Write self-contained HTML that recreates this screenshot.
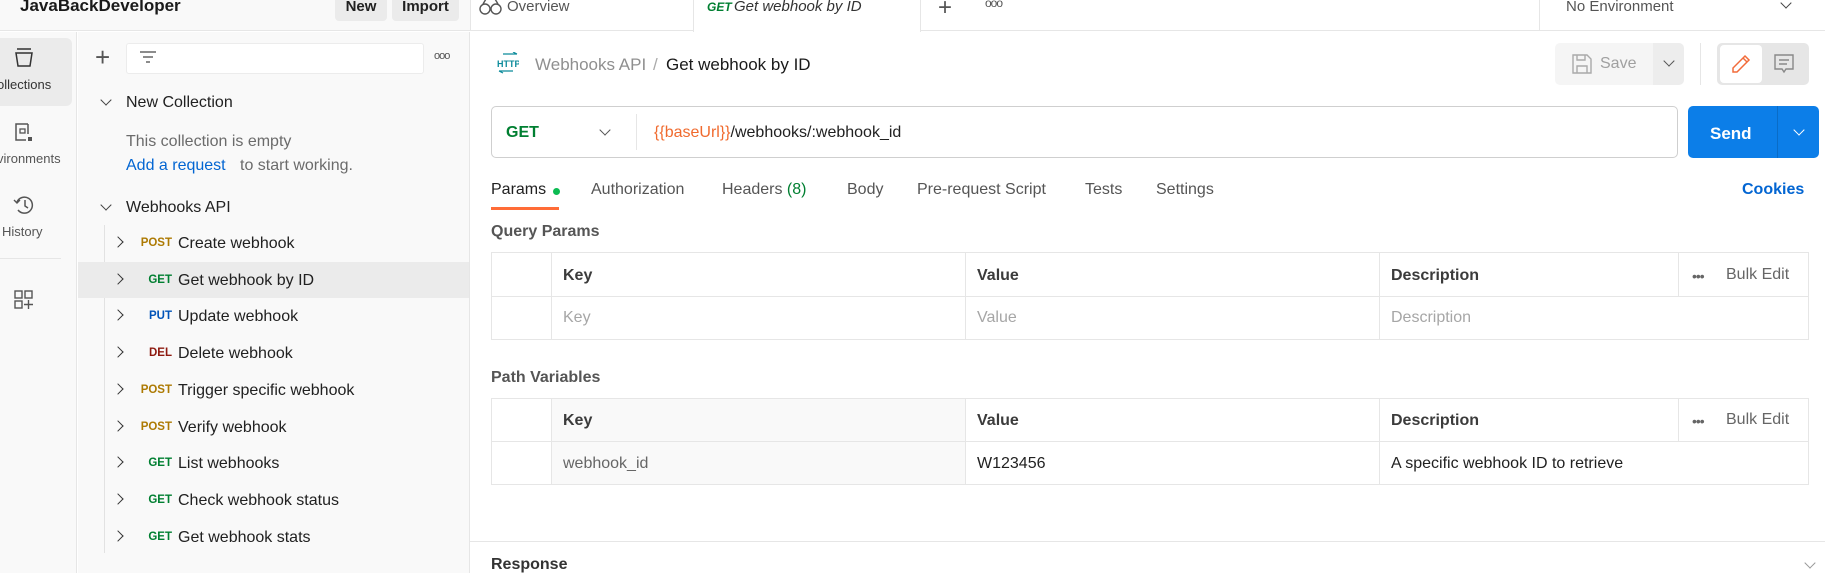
<!DOCTYPE html>
<html><head><meta charset="utf-8">
<style>
*{box-sizing:border-box;margin:0;padding:0}
body{width:1825px;height:573px;overflow:hidden;position:relative;background:#fff;font-family:"Liberation Sans",Arial,sans-serif;color:#212121;font-size:16px}
.a{position:absolute;white-space:nowrap}
.t{margin-top:2px}
.m{font-size:11.5px;font-weight:bold;text-align:right;width:50px}
.post{color:#ad7a03}.get{color:#007f31}.put{color:#0053b8}.del{color:#8e1a10}
.chev{position:absolute;left:114px;width:8px;height:8px;border-right:1.5px solid #333;border-bottom:1.5px solid #333;transform:rotate(-45deg)}
.dn{position:absolute;width:8px;height:8px;border-right:1.5px solid #444;border-bottom:1.5px solid #444;transform:rotate(45deg)}
.th{font-weight:bold;color:#3b3b3b}
.ph{color:#a6a6a6}
</style></head><body>
<!-- top bar -->
<div class="a" style="left:0;top:0;width:470px;height:31px;background:#f9f9f9;border-bottom:1px solid #e6e6e6"></div>
<div class="a" style="left:20px;top:-4px;font-size:17px;font-weight:bold;color:#1a1a1a">JavaBackDeveloper</div>
<div class="a" style="left:335px;top:-6px;width:52px;height:27px;background:#ebebeb;border-radius:4px;font-size:15px;font-weight:bold;text-align:center;line-height:26px">New</div>
<div class="a" style="left:392px;top:-6px;width:67px;height:27px;background:#ebebeb;border-radius:4px;font-size:15px;font-weight:bold;text-align:center;line-height:26px">Import</div>
<div class="a" style="left:470px;top:0;width:1355px;height:31px;border-bottom:1px solid #e6e6e6;border-left:1px solid #e6e6e6"></div>
<div class="a" style="left:693px;top:0;width:228px;height:32px;background:#fff;border-left:1px solid #e6e6e6;border-right:1px solid #e6e6e6"></div>
<svg class="a" style="left:479px;top:0" width="24" height="16" viewBox="0 0 24 16"><circle cx="6" cy="9" r="5" fill="none" stroke="#555" stroke-width="1.4"/><circle cx="17" cy="9" r="5" fill="none" stroke="#555" stroke-width="1.4"/><path d="M4 4 L7 -1 M19 4 L16 -1" stroke="#555" stroke-width="1.4"/></svg>
<div class="a" style="left:507px;top:-2px;font-size:15px;color:#555">Overview</div>
<div class="a" style="left:707px;top:0px;font-size:12px;font-weight:bold;font-style:italic;color:#007f31">GET</div>
<div class="a" style="left:734px;top:-2px;font-size:15px;font-style:italic;color:#333">Get webhook by ID</div>
<div class="a" style="left:938px;top:-6px;font-size:24px;color:#555;font-weight:200">+</div>
<div class="a" style="left:985px;top:-4px;font-size:12px;color:#555;letter-spacing:-1px">ooo</div>
<div class="a" style="left:1539px;top:0;width:1px;height:31px;background:#e6e6e6"></div>
<div class="a" style="left:1566px;top:-2px;font-size:15px;color:#555">No Environment</div>
<div class="dn" style="left:1782px;top:-1px"></div>
<!-- rail -->
<div class="a" style="left:0;top:32px;width:77px;height:541px;background:#f9f9f9;border-right:1px solid #e6e6e6"></div>
<div class="a" style="left:0;top:38px;width:72px;height:68px;background:#ebebeb;border-radius:0 6px 6px 0"></div>
<svg class="a" style="left:15px;top:48px" width="18" height="20" viewBox="0 0 18 20"><path d="M2 1H16 M1 5H17 L15 18H3 Z" fill="none" stroke="#333" stroke-width="1.5"/></svg>
<div class="a" style="left:-3px;top:77px;font-size:13px;color:#333">ollections</div>
<svg class="a" style="left:14px;top:122px" width="20" height="20" viewBox="0 0 20 20"><path d="M14 2H2V18H12" fill="none" stroke="#555" stroke-width="1.5"/><path d="M14 2V12" stroke="#555" stroke-width="1.5"/><rect x="6" y="7" width="5" height="4" fill="none" stroke="#555" stroke-width="1.3"/><rect x="14" y="15" width="4" height="4" fill="#555"/></svg>
<div class="a" style="left:-3px;top:151px;font-size:13px;color:#555">vironments</div>
<svg class="a" style="left:13px;top:194px" width="22" height="22" viewBox="0 0 22 22"><path d="M4 8A8 8 0 1 1 5 16" fill="none" stroke="#555" stroke-width="1.5"/><path d="M1 6L4 9L7 6" fill="none" stroke="#555" stroke-width="1.4"/><path d="M12 6V12L15 14" fill="none" stroke="#555" stroke-width="1.5"/></svg>
<div class="a" style="left:2px;top:224px;font-size:13px;color:#555">History</div>
<div class="a" style="left:0;top:258px;width:61px;height:1px;background:#e6e6e6"></div>
<svg class="a" style="left:13px;top:289px" width="22" height="22" viewBox="0 0 22 22"><g fill="none" stroke="#555" stroke-width="1.4"><rect x="2" y="2" width="7" height="7"/><rect x="12" y="2" width="7" height="7"/><rect x="2" y="12" width="7" height="7"/><path d="M15.5 11V20M11 15.5H20"/></g></svg>
<!-- sidebar -->
<div class="a" style="left:78px;top:32px;width:392px;height:541px;background:#f9f9f9;border-right:1px solid #e6e6e6"></div>
<div class="a" style="left:95px;top:42px;font-size:26px;color:#555;font-weight:200">+</div>
<div class="a" style="left:126px;top:43px;width:298px;height:31px;background:#fff;border:1px solid #ececec;border-radius:3px"></div>
<svg class="a" style="left:139px;top:50px" width="18" height="16" viewBox="0 0 18 16"><path d="M1 2H17M4 7H14M7 12H11" stroke="#666" stroke-width="1.4"/></svg>
<div class="a" style="left:434px;top:50px;font-size:11px;color:#555;letter-spacing:-1px">ooo</div>
<div class="dn" style="left:102px;top:96px"></div>
<div class="a t" style="left:126px;top:92px">New Collection</div>
<div class="a t" style="left:126px;top:131px;color:#6b6b6b">This collection is empty</div>
<div class="a t" style="left:126px;top:155px;color:#0265d2">Add a request</div>
<div class="a t" style="left:240px;top:155px;color:#6b6b6b">to start working.</div>
<div class="dn" style="left:102px;top:201px"></div>
<div class="a t" style="left:126px;top:197px">Webhooks API</div>
<div class="a" style="left:104px;top:225px;width:1px;height:328px;background:#e2e2e2"></div>
<div class="a" style="left:78px;top:262px;width:391px;height:36px;background:#ebebeb"></div>
<div class="chev" style="top:238px"></div><div class="a m post" style="left:122px;top:237px">POST</div><div class="a t" style="left:178px;top:233px">Create webhook</div>
<div class="chev" style="top:275px"></div><div class="a m get" style="left:122px;top:274px">GET</div><div class="a t" style="left:178px;top:270px">Get webhook by ID</div>
<div class="chev" style="top:311px"></div><div class="a m put" style="left:122px;top:310px">PUT</div><div class="a t" style="left:178px;top:306px">Update webhook</div>
<div class="chev" style="top:348px"></div><div class="a m del" style="left:122px;top:347px">DEL</div><div class="a t" style="left:178px;top:343px">Delete webhook</div>
<div class="chev" style="top:385px"></div><div class="a m post" style="left:122px;top:384px">POST</div><div class="a t" style="left:178px;top:380px">Trigger specific webhook</div>
<div class="chev" style="top:422px"></div><div class="a m post" style="left:122px;top:421px">POST</div><div class="a t" style="left:178px;top:417px">Verify webhook</div>
<div class="chev" style="top:458px"></div><div class="a m get" style="left:122px;top:457px">GET</div><div class="a t" style="left:178px;top:453px">List webhooks</div>
<div class="chev" style="top:495px"></div><div class="a m get" style="left:122px;top:494px">GET</div><div class="a t" style="left:178px;top:490px">Check webhook status</div>
<div class="chev" style="top:532px"></div><div class="a m get" style="left:122px;top:531px">GET</div><div class="a t" style="left:178px;top:527px">Get webhook stats</div>
<!-- main -->
<svg class="a" style="left:497px;top:52px" width="22" height="22" viewBox="0 0 22 22"><path d="M6 2H20M16 0L20 2" stroke="#0a8a9a" stroke-width="1.2" fill="none"/><text x="0" y="15" font-size="9" font-family="Liberation Sans" font-weight="bold" fill="#0a8a9a">HTTP</text><path d="M2 19H16M6 21L2 19" stroke="#0a8a9a" stroke-width="1.2" fill="none"/></svg>
<div class="a t" style="left:535px;top:53px;font-size:17px;color:#8f8f8f">Webhooks API</div>
<div class="a t" style="left:653px;top:53px;font-size:17px;color:#aaa">/</div>
<div class="a t" style="left:666px;top:53px;font-size:17px;color:#1a1a1a">Get webhook by ID</div>
<div class="a" style="left:1555px;top:43px;width:98px;height:42px;background:#f5f5f5;border-radius:5px 0 0 5px"></div>
<div class="a" style="left:1653px;top:43px;width:31px;height:42px;background:#ededed;border-radius:0 5px 5px 0"></div>
<svg class="a" style="left:1572px;top:54px" width="20" height="20" viewBox="0 0 20 20"><path d="M1 1H15L19 5V19H1Z M5 1V6H13V1 M5 19V12H15V19" fill="none" stroke="#aaa" stroke-width="1.4"/></svg>
<div class="a t" style="left:1600px;top:53px;font-size:16px;color:#a0a0a0">Save</div>
<div class="dn" style="left:1665px;top:57px;border-color:#555"></div>
<div class="a" style="left:1700px;top:43px;width:1px;height:42px;background:#e6e6e6"></div>
<div class="a" style="left:1717px;top:43px;width:92px;height:42px;background:#e6e6e6;border-radius:5px"></div>
<div class="a" style="left:1720px;top:45px;width:42px;height:38px;background:#fff;border-radius:4px"></div>
<svg class="a" style="left:1731px;top:54px" width="20" height="20" viewBox="0 0 20 20"><path d="M14 2L18 6L6 18H2V14Z M12 4L16 8" fill="none" stroke="#f26b3a" stroke-width="1.5"/></svg>
<svg class="a" style="left:1774px;top:54px" width="20" height="20" viewBox="0 0 20 20"><path d="M1 1H19V15H12L10 18L8 15H1Z M5 6H15M5 10H13" fill="none" stroke="#888" stroke-width="1.4"/></svg>
<div class="a" style="left:491px;top:106px;width:1187px;height:52px;border:1px solid #cfcfcf;border-radius:5px"></div>
<div class="a t" style="left:506px;top:122px;font-size:16px;font-weight:bold;color:#007f31">GET</div>
<div class="dn" style="left:601px;top:126px;border-color:#555"></div>
<div class="a" style="left:636px;top:114px;width:1px;height:36px;background:#e6e6e6"></div>
<div class="a t" style="left:654px;top:122px"><span style="color:#f06a2e">{{baseUrl}}</span>/webhooks/:webhook_id</div>
<div class="a" style="left:1688px;top:106px;width:131px;height:52px;background:#0c7ee8;border-radius:5px"></div>
<div class="a" style="left:1777px;top:106px;width:1px;height:52px;background:#0a6cc7"></div>
<div class="a t" style="left:1710px;top:122px;font-size:17px;font-weight:bold;color:#fff">Send</div>
<div class="dn" style="left:1795px;top:126px;border-color:#fff"></div>
<!-- tabs -->
<div class="a t" style="left:491px;top:179px;color:#212121">Params</div>
<div class="a" style="left:553px;top:188px;width:7px;height:7px;border-radius:50%;background:#0cbb52"></div>
<div class="a" style="left:491px;top:207px;width:68px;height:3px;background:#ff6c37"></div>
<div class="a t" style="left:591px;top:179px;color:#555">Authorization</div>
<div class="a t" style="left:722px;top:179px;color:#555">Headers <span style="color:#007f31">(8)</span></div>
<div class="a t" style="left:847px;top:179px;color:#555">Body</div>
<div class="a t" style="left:917px;top:179px;color:#555">Pre-request Script</div>
<div class="a t" style="left:1085px;top:179px;color:#555">Tests</div>
<div class="a t" style="left:1156px;top:179px;color:#555">Settings</div>
<div class="a t" style="left:1742px;top:179px;font-weight:bold;color:#0265d2">Cookies</div>
<div class="a t" style="left:491px;top:221px;font-weight:bold;color:#555">Query Params</div>
<!-- table 1 -->
<div class="a" style="left:491px;top:252px;width:1318px;height:88px;border:1px solid #e6e6e6"></div>
<div class="a" style="left:491px;top:296px;width:1318px;height:1px;background:#e6e6e6"></div>
<div class="a" style="left:551px;top:252px;width:1px;height:88px;background:#e6e6e6"></div>
<div class="a" style="left:965px;top:252px;width:1px;height:88px;background:#e6e6e6"></div>
<div class="a" style="left:1379px;top:252px;width:1px;height:88px;background:#e6e6e6"></div>
<div class="a" style="left:1678px;top:252px;width:1px;height:44px;background:#e6e6e6"></div>
<div class="a th t" style="left:563px;top:265px">Key</div>
<div class="a th t" style="left:977px;top:265px">Value</div>
<div class="a th t" style="left:1391px;top:265px">Description</div>
<div class="a" style="left:1692px;top:268px;color:#666;font-size:14px;letter-spacing:-1px">•••</div>
<div class="a t" style="left:1726px;top:264px;color:#666">Bulk Edit</div>
<div class="a ph t" style="left:563px;top:307px">Key</div>
<div class="a ph t" style="left:977px;top:307px">Value</div>
<div class="a ph t" style="left:1391px;top:307px">Description</div>
<div class="a t" style="left:491px;top:367px;font-weight:bold;color:#555">Path Variables</div>
<!-- table 2 -->
<div class="a" style="left:491px;top:398px;width:1318px;height:87px;border:1px solid #e6e6e6"></div>
<div class="a" style="left:552px;top:399px;width:413px;height:85px;background:#f9f9f9"></div>
<div class="a" style="left:491px;top:441px;width:1318px;height:1px;background:#e6e6e6"></div>
<div class="a" style="left:551px;top:398px;width:1px;height:87px;background:#e6e6e6"></div>
<div class="a" style="left:965px;top:398px;width:1px;height:87px;background:#e6e6e6"></div>
<div class="a" style="left:1379px;top:398px;width:1px;height:87px;background:#e6e6e6"></div>
<div class="a" style="left:1678px;top:398px;width:1px;height:43px;background:#e6e6e6"></div>
<div class="a th t" style="left:563px;top:410px">Key</div>
<div class="a th t" style="left:977px;top:410px">Value</div>
<div class="a th t" style="left:1391px;top:410px">Description</div>
<div class="a" style="left:1692px;top:413px;color:#666;font-size:14px;letter-spacing:-1px">•••</div>
<div class="a t" style="left:1726px;top:409px;color:#666">Bulk Edit</div>
<div class="a t" style="left:563px;top:453px;color:#666">webhook_id</div>
<div class="a t" style="left:977px;top:453px">W123456</div>
<div class="a t" style="left:1391px;top:453px">A specific webhook ID to retrieve</div>
<!-- response -->
<div class="a" style="left:470px;top:541px;width:1355px;height:1px;background:#e6e6e6"></div>
<div class="a t" style="left:491px;top:554px;font-weight:bold;color:#333">Response</div>
<div class="dn" style="left:1806px;top:559px;border-color:#999"></div>
</body></html>
